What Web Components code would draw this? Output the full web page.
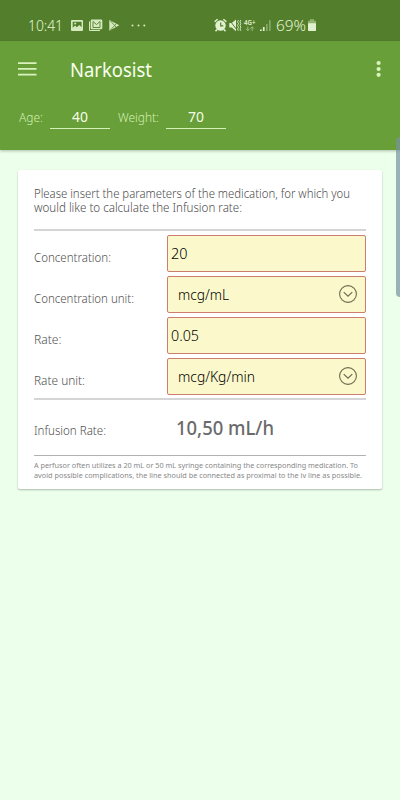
<!DOCTYPE html>
<html lang="en"><head><meta charset="utf-8"><title>Narkosist</title>
<style>html,body{margin:0;height:100%;overflow:hidden;background:#ebffeb;font-family:"Noto Sans","Open Sans",sans-serif}</style></head>
<body><narkosist-app></narkosist-app>
<script>
function define(name, html, ready) {
  const t = document.createElement('template');
  t.innerHTML = html;
  customElements.define(name, class extends HTMLElement {
    connectedCallback() {
      if (this.shadowRoot) return;
      this.attachShadow({mode: 'open'}).append(t.content.cloneNode(true));
      if (ready) ready(this, this.shadowRoot);
    }
  });
}

// One line of text, condensed or widened to the width given in "w"
define('fit-text', `<style>
  :host{display:block;white-space:nowrap;flex:none}
  span{display:inline-block;transform-origin:0 50%;vertical-align:top}
  </style><span><slot></slot></span>`, (el, root) => {
  const s = root.querySelector('span'), w = +el.getAttribute('w');
  s.style.transform = `scaleX(${w / s.getBoundingClientRect().width})`;
  el.style.width = w + 'px';
});

define('status-bar', `<style>
  :host{display:flex;height:41px;box-sizing:border-box;padding:16px 0 0 28px;background:#537f2c;color:#e6f6d4;font-size:15px;line-height:19px;font-weight:300}
  svg{display:block;flex:none}
  </style>
  <fit-text w="35">10:41</fit-text>
  <svg width="151" height="20" viewBox="63 16 151 20" fill="#d5eabf">
    <path fill-rule="evenodd" d="M72 20h10q1 0 1 1v9q0 1-1 1H72q-1 0-1-1v-9q0-1 1-1zm.7 1.700v6l2.300-2.200 1.800 1.800 2.600-2.400 2.200 2.300v-5.500z"/>
    <circle cx="75.200" cy="23.500" r="1"/>
    <path d="M89.500 21.500v9h10.500" fill="none" stroke="#d5eabf" stroke-width="1"/>
    <path d="M92 19.500h9q1.300 0 1.300 1.300v7.200q0 1.300-1.300 1.300h-9q-1.300 0-1.300-1.300v-7.200q0-1.300 1.300-1.300z"/>
    <path d="M93 27.500v-6l3.500 3 3.500-3v6z" fill="none" stroke="#537f2c" stroke-width=".9"/>
    <path d="M109.300 20l10 5.300-10 5.500z"/><path d="M110.500 21l6 6.500M110.500 30l6-6.500" stroke="#537f2c" stroke-width=".8"/>
    <circle cx="132.500" cy="25.400" r="1"/><circle cx="138.500" cy="25.400" r="1"/><circle cx="144.300" cy="25.400" r="1"/>
  </svg>
  <svg width="62" height="20" viewBox="214 16 62 20" fill="#e1f1d0">
    <circle cx="220.500" cy="25.500" r="5.200"/><path d="M214.600 21.800l3-2.600M226.400 21.800l-3-2.600M217 29.500l-1.500 1.700M224 29.500l1.500 1.700" stroke="#e1f1d0" stroke-width="1.500"/>
    <path d="M220.700 22.500v3.300h2.600" fill="none" stroke="#537f2c" stroke-width="1.200"/>
    <path d="M229.300 23h2.500l4.200-3.500v11.700l-4.200-3.700h-2.500z"/><path d="M229 19.500l8 10.500" stroke="#537f2c" stroke-width="1"/>
    <path d="M238.500 20l-1 1.800 1 1.800-1 1.800 1 1.800-1 1.800 1 1.800M240.800 20l-.8 1.800.8 1.800-.8 1.800.8 1.800-.8 1.800.8 1.800" fill="none" stroke="#e1f1d0" stroke-width=".9"/>
    <text x="244" y="25" font-size="6.300" font-weight="600" textLength="11.500" lengthAdjust="spacingAndGlyphs">4G+</text>
    <path d="M247.800 26.500v4M246 28.800l1.800 2 1.800-2M252.200 31v-4M250.400 28.700l1.800-2 1.800 2" fill="none" stroke="#9dbc7d"/>
    <path d="M260 29.500h1.700V31H260zM262.900 27h1.700v4h-1.700z"/><path d="M266 24h1.700v7H266zM269 20.300h1.700V31H269z" fill="#87a968"/>
  </svg>
  <fit-text w="30">69%</fit-text>
  <svg width="12" height="20" viewBox="306 16 12 20" fill="#e1f1d0"><path d="M310 19.300h4v1.500h2V24h-8v-3.200h2z" fill="#94b474"/><path d="M308 23.300h8v6.900q0 .8-.8.800h-6.400q-.8 0-.8-.8z"/></svg>`);

define('patient-field', `<style>
  :host{display:flex;color:#d2efb4}
  .v{box-sizing:border-box;width:60px;height:20px;border-bottom:1px solid #d5efb9;display:flex;justify-content:center;color:#f4fde9}
  </style><slot name="label"></slot><div class="v"><slot></slot></div>`);

define('app-header', `<style>
  :host{display:block;height:109px;background:#689f38;color:#f8fff0;box-shadow:0 1px 3px #0004}
  .bar{display:flex;align-items:center;height:56px;padding:0 18px}
  fit-text.title{font-size:20px;line-height:28px;margin:1px auto 0 32.500px;font-weight:400}
  .patient{display:flex;padding:12px 0 0 19px;gap:8px}
  patient-field fit-text{margin:-1px 7px 0 0;line-height:20px;font-size:12.500px;font-weight:300}
  patient-field b{font-weight:400;display:block}
  patient-field b fit-text{margin:-1px 0 0;font-size:14px;line-height:17px;font-weight:400}
  svg{display:block;flex:none}
  </style>
  <div class="bar">
    <svg width="19" height="14" viewBox="0 0 19 14" fill="#d9f2bf"><path d="M0 .2h18.500v1.700H0zM0 6h18.500v1.700H0zM0 11.800h18.500v1.700H0z"/></svg>
    <fit-text class="title" w="82">Narkosist</fit-text>
    <svg width="7" height="18" viewBox="0 0 7 18" fill="#d9f2bf"><circle cx="3.600" cy="3" r="2.100"/><circle cx="3.600" cy="9" r="2.100"/><circle cx="3.600" cy="14.800" r="2.100"/></svg>
  </div>
  <div class="patient">
    <patient-field><fit-text slot="label" w="24">Age:</fit-text><b><fit-text w="16">40</fit-text></b></patient-field>
    <patient-field><fit-text slot="label" w="41">Weight:</fit-text><b><fit-text w="16">70</fit-text></b></patient-field>
  </div>`);

define('param-row', `<style>
  :host{display:flex;height:37px;color:#505050;justify-content:space-between}
  .l{padding-top:13px;font-size:12px;line-height:20px}
  .box{box-sizing:border-box;width:199.500px;height:37px;border:1px solid #cb7d6e;border-radius:2px;background:#fbf8cb;display:flex;align-items:center;justify-content:space-between;padding:0 8.500px 0 3px;font-size:14px;line-height:20px;color:#000}
  :host([select]) .box{padding:0 8.500px 0 10px}
  svg{display:none}:host([select]) svg{display:block;margin-top:-1px}
  </style><div class="l"><slot name="label"></slot></div><div class="box"><slot></slot>
  <svg width="18" height="18" viewBox="0 0 18 18" fill="none" stroke="#6d6b50" stroke-width="1.100"><circle cx="9" cy="9" r="8.400"/><path d="M4.700 7.100L9 11.200l4.300-4.100" stroke-width="1.200"/></svg></div>`);

define('info-card', `<style>
  :host{display:block;box-sizing:border-box;margin:20px 18px 0;height:319px;padding:17px 16px 0;background:#fff;border-radius:2px;box-shadow:0 1px 2px #0004}
  </style><slot></slot>`);

define('scroll-thumb', `<style>:host{position:absolute;right:0;top:137px;width:4px;height:160px;border-radius:4px 0 0 4px;background:#78939fb5}</style>`);

define('narkosist-app', `<style>
  :host{display:block;position:relative;height:800px;background:#ebffeb;overflow:hidden;font-weight:300}
  .intro{font-size:12px;line-height:13.500px;color:#4c4c4c}
  hr{border:0;margin:0;background:#d5d5d8;height:2px}
  .rows{display:grid;gap:4px;margin:4px 0 3px}
  .result{display:flex;align-items:flex-start;height:55px;color:#505050}
  .result .k{font-size:12px;line-height:20px;margin:21px 70px 0 0}
  .result .v{font-size:19.500px;line-height:28px;margin-top:14px;font-weight:500;color:#6a6a6a}
  .note{margin-top:5px;font-size:7.500px;line-height:9.500px;color:#888;font-weight:400}
  </style>
  <status-bar></status-bar><app-header></app-header>
  <info-card>
    <div class="intro"><fit-text w="316">Please insert the parameters of the medication, for which you</fit-text><fit-text w="208">would like to calculate the Infusion rate:</fit-text></div>
    <hr style="margin-top:15px">
    <div class="rows">
      <param-row><fit-text slot="label" w="77">Concentration:</fit-text><fit-text w="16.500">20</fit-text></param-row>
      <param-row select><fit-text slot="label" w="100">Concentration unit:</fit-text><fit-text w="51">mcg/mL</fit-text></param-row>
      <param-row><fit-text slot="label" w="27.500">Rate:</fit-text><fit-text w="28">0.05</fit-text></param-row>
      <param-row select><fit-text slot="label" w="51">Rate unit:</fit-text><fit-text w="77">mcg/Kg/min</fit-text></param-row>
    </div>
    <hr>
    <div class="result"><fit-text class="k" w="72">Infusion Rate:</fit-text><fit-text class="v" w="98">10,50 mL/h</fit-text></div>
    <hr style="height:1px;background:#b2b2b2">
    <div class="note"><fit-text w="324">A perfusor often utilizes a 20 mL or 50 mL syringe containing the corresponding medication. To</fit-text><fit-text w="328">avoid possible complications, the line should be connected as proximal to the iv line as possible.</fit-text></div>
  </info-card>
  <scroll-thumb></scroll-thumb>`);
</script></body></html>
